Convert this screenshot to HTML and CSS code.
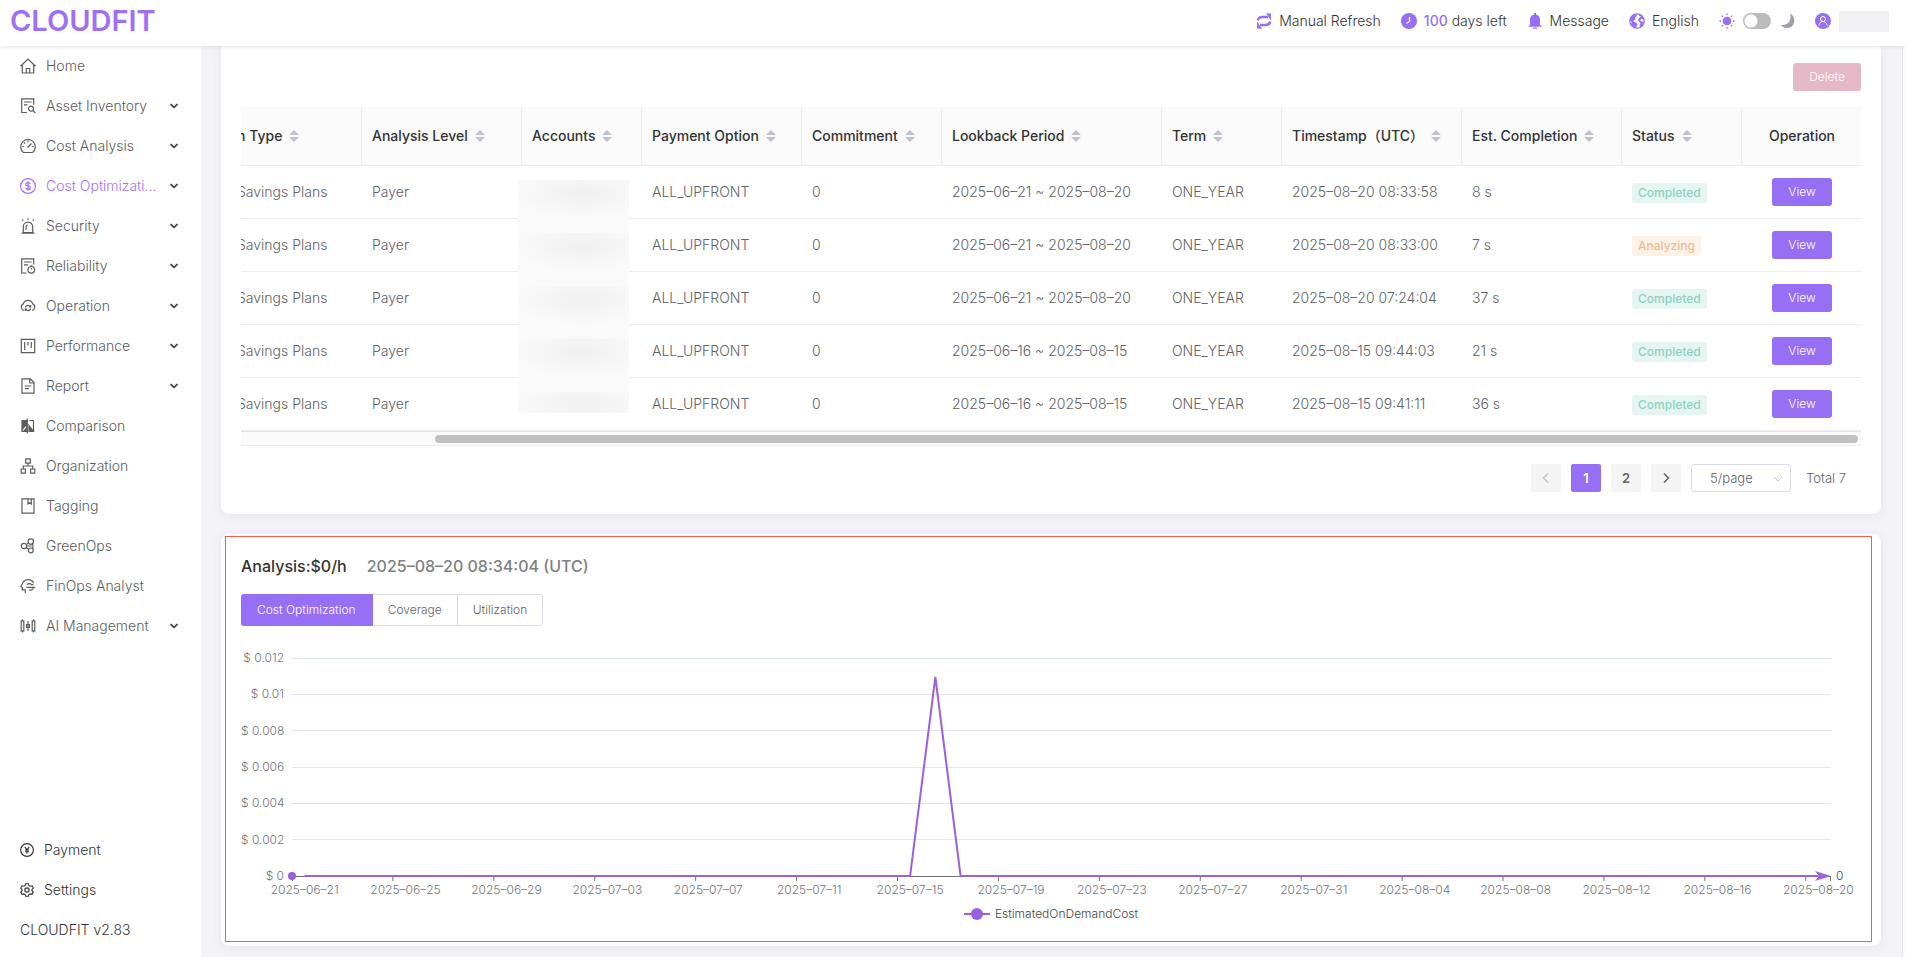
FILE: index.html
```html
<!DOCTYPE html>
<html lang="en">
<head>
<meta charset="utf-8">
<title>CLOUDFIT</title>
<link rel="stylesheet" href="styles.css">
</head>
<body>
<svg class="defs" aria-hidden="true">
  <symbol id="chev" viewBox="0 0 10 10"><path d="M1.500 3.200 5 6.400 8.500 3.200" fill="none" stroke="currentColor" stroke-width="1.800"/></symbol>
  <symbol id="sort" viewBox="0 0 10 14"><path d="M5 1 10 6H0zM5 13 0 8h10z" fill="currentColor"/></symbol>
</svg>
<header class="topbar">
  <a class="logo" href="#">CLOUDFIT</a>
  <div class="tools">
    <button class="tool"><svg class="ticon" viewBox="0 0 16 16"><path d="M1.800 7.500C2.200 5 4 4 6.500 4H12M14.200 8.500c-.4 2.500-2.200 3.500-4.700 3.500H4" fill="none" stroke="currentColor" stroke-width="2.400"/><path d="M10 .3l5 .2v7zM6 15.700l-5-.2v-7z" fill="currentColor"/></svg>Manual Refresh</button>
    <div class="tool"><svg class="ticon" viewBox="0 0 16 16"><circle cx="8" cy="8" r="8" fill="currentColor"/><path d="M8.500 4v4.500L5.500 10.500" fill="none" stroke="#fff" stroke-width="1.300"/></svg><span><b class="days">100</b> days left</span></div>
    <button class="tool"><svg class="ticon" viewBox="0 0 16 16"><path d="M7 0h2v1.500c2.600.6 4 2.500 4 5V12l1.500 1v.7h-13V13L3 12V6.500c0-2.500 1.400-4.400 4-5zM6 14.500h4v1.200H6z" fill="currentColor"/></svg>Message</button>
    <button class="tool"><svg class="ticon" viewBox="0 0 16 16"><circle cx="8" cy="8" r="7.200" fill="none" stroke="currentColor" stroke-width="1.300"/><path d="M.8 7.500C1 4 3.500 1.300 7 1l1 2-2 1.500.5 2L4 8l3 1.500 1.500 2L7 15c-2-.3-4.500-2-5.500-4.500l1.500-1zM9.500 1c3 .7 5 3 5.500 5.500l-2.500-.7-1.500 2 2.800 1L15 9c-.5 2.500-1.800 4.500-4 5.500l-.5-2.500 1-2-2.500-2.500L10 5l2-1.500-2-.7z" fill="currentColor"/></svg>English</button>
    <label class="tool theme"><svg class="ticon" viewBox="0 0 16 16"><circle cx="8" cy="8" r="4.300" fill="currentColor"/><path d="M8 .5v1.500M8 14v1.500M.5 8H2M14 8h1.500M2.700 2.700l1.100 1.100M12.200 12.200l1.100 1.100M2.700 13.300l1.100-1.100M12.200 3.800l1.100-1.100" stroke="currentColor" stroke-width="1.400"/></svg><input class="switch" type="checkbox" role="switch" aria-label="Dark theme"><svg class="ticon moon" viewBox="0 0 16 16"><path d="M11 .5C15 2.500 16.500 7 14.500 11 12.500 15.500 6 17 1 11.500 6.500 13.500 13.500 9.500 11 .5z" fill="currentColor"/></svg></label>
    <button class="tool user" aria-label="Account"><svg class="ticon" viewBox="0 0 16 16"><circle cx="8" cy="8" r="8" fill="currentColor"/><circle cx="8" cy="6" r="2.500" fill="none" stroke="#fff"/><path d="M3.800 12.500C4.300 10 6 8.500 8 8.500s3.700 1.500 4.200 4" fill="none" stroke="#fff"/></svg><span class="masked"></span></button>
  </div>
</header>
<div class="shell">
<aside class="side">
  <nav class="menu">
    <a class="item" href="#"><svg class="icon" viewBox="0 0 16 16"><path d="M.5 8.300 8 1l7.500 7.300M2.300 7v8h11.400V7M6.300 15v-4.500h3.400V15"/></svg><span>Home</span></a>
    <a class="item" href="#"><svg class="icon" viewBox="0 0 16 16"><path d="M7 14.500H1.700V.800h12v6M4 4h7.500M4 6.800h3.500M13 12.500l2.500 2.700"/><circle cx="11" cy="10.600" r="2.500"/></svg><span>Asset Inventory</span><svg class="chev"><use href="#chev"/></svg></a>
    <a class="item" href="#"><svg class="icon" viewBox="0 0 16 16"><path d="M3.500 14.500a7.300 7.300 0 1 1 9 0zM7.500 9.500l4-4M8 2.500v1.800M2.300 8.500h1.800M4 4.500l1.200 1.200M11.900 8.500h1.800"/></svg><span>Cost Analysis</span><svg class="chev"><use href="#chev"/></svg></a>
    <a class="item active" href="#"><svg class="icon" viewBox="0 0 16 16"><circle cx="8" cy="8" r="7.400"/><path d="M10.300 6C10 5 9.100 4.600 8 4.600c-1.300 0-2.300.6-2.300 1.600 0 2.400 4.700 1 4.700 3.500 0 1.100-1 1.700-2.400 1.700-1.300 0-2.200-.5-2.500-1.500M8 3.300v9.400"/></svg><span>Cost Optimizati...</span><svg class="chev"><use href="#chev"/></svg></a>
    <a class="item" href="#"><svg class="icon" viewBox="0 0 16 16"><path d="M1.500 15.200h13M3.300 14.500V8.800a4.700 4.700 0 0 1 9.400 0v5.700zM6 12V9c0-1 .7-1.800 1.700-1.900M8 .3V2M2.200 1.500l1 1.300M13.800 1.500l-1 1.300"/></svg><span>Security</span><svg class="chev"><use href="#chev"/></svg></a>
    <a class="item" href="#"><svg class="icon" viewBox="0 0 16 16"><path d="M6.500 15H1.700V.800h12V6.500M4 4h7.500M4 6.800h4M10.500 7.800h2M11.500 10v1.500"/><circle cx="11.300" cy="11.800" r="3.300"/></svg><span>Reliability</span><svg class="chev"><use href="#chev"/></svg></a>
    <a class="item" href="#"><svg class="icon" viewBox="0 0 16 16"><path d="M4 12.500A3.500 3.500 0 0 1 3.300 5.900 4.900 4.900 0 0 1 12.700 5.900 3.500 3.500 0 0 1 12 12.500M5.300 9.500A2.800 2.800 0 0 1 10.400 8.800M10.700 10.500A2.800 2.800 0 0 1 5.600 11.300M10.700 7v2H8.900M5.300 13v-2h1.800"/></svg><span>Operation</span><svg class="chev"><use href="#chev"/></svg></a>
    <a class="item" href="#"><svg class="icon" viewBox="0 0 16 16"><path d="M1.300 1.300h13.400v13.400H1.300z"/><path d="M4.700 4v8M8 4v3.500M11.300 4v6"/></svg><span>Performance</span><svg class="chev"><use href="#chev"/></svg></a>
    <a class="item" href="#"><svg class="icon" viewBox="0 0 16 16"><path d="M2 .800h8.500L14 4.500V15.200H2zM9.800 1v4H14M4.800 8h6.500M4.800 10.700h4"/></svg><span>Report</span><svg class="chev"><use href="#chev"/></svg></a>
    <a class="item" href="#"><svg class="icon" viewBox="0 0 16 16"><path d="M2 2.500h5v11H2z" fill="currentColor"/><path d="M7.300.5v15M9.500 2.500h4v11"/><path d="M9 7.500l4.500 6H9z" fill="currentColor"/><path d="M3 12.500l3-3.800" stroke="#fff"/></svg><span>Comparison</span></a>
    <a class="item" href="#"><svg class="icon" viewBox="0 0 16 16"><path d="M5.700.8h4.600v4.400H5.700zM1.200 11h4.200v4.200H1.200zM10.600 11h4.200v4.200h-4.200zM8 5.200V8M3.300 11V8h9.400v3"/></svg><span>Organization</span></a>
    <a class="item" href="#"><svg class="icon" viewBox="0 0 16 16"><path d="M2 .8h12v14.400H2zM8 1v5l1.600-1.200L11.300 6V1"/></svg><span>Tagging</span></a>
    <a class="item" href="#"><svg class="icon" viewBox="0 0 16 16"><circle cx="4" cy="8" r="2.700"/><circle cx="10.800" cy="3.600" r="2.700"/><circle cx="10.800" cy="12.400" r="2.400"/><path d="M6.300 6.500l2-1.300M6.300 9.500l2.200 1.500M6.700 8h5M12.800 5.500v5.200"/></svg><span>GreenOps</span></a>
    <a class="item" href="#"><svg class="icon" viewBox="0 0 16 16"><path d="M13.700 5A6.200 6.200 0 0 0 2.300 6L.8 8.700l1.500.6v2.500h3V15M6.800 6.700c1.500-1.500 3.500-1.300 5 0h1.700M6.500 9.300h8.700M9 11.800c1.500 1 3.500.3 4.300-1.500"/></svg><span>FinOps Analyst</span></a>
    <a class="item" href="#"><svg class="icon" viewBox="0 0 16 16"><rect x="1.200" y="3" width="2.600" height="10"/><rect x="12.200" y="3" width="2.600" height="10"/><path d="M2.500 1.500V3M2.500 13v1.500M13.500 1.500V3M13.500 13v1.500M8 3v10M6.500 6.500h3v3h-3z"/></svg><span>AI Management</span><svg class="chev"><use href="#chev"/></svg></a>
  </nav>
  <nav class="menu foot">
    <a class="item" href="#"><svg class="icon small" viewBox="0 0 16 16"><circle cx="8" cy="8" r="7.300"/><path d="M5.500 4.500 8 7.800l2.500-3.300M8 7.800V12M5.700 8h4.600M5.700 10h4.600"/></svg><span>Payment</span></a>
    <a class="item" href="#"><svg class="icon small" viewBox="0 0 16 16"><path d="M6.500.800h3l.6 2 1.500.9 2.100-.5 1.500 2.600L13.700 7.300v1.500l1.500 1.500-1.500 2.600-2.100-.5-1.500.9-.6 1.900h-3l-.6-1.900-1.500-.9-2.100.5L.8 10.300l1.500-1.500V7.300L.8 5.800l1.500-2.600 2.100.5 1.500-.9z"/><circle cx="8" cy="8" r="2.400"/></svg><span>Settings</span></a>
    <div class="item">CLOUDFIT v2.83</div>
  </nav>
</aside>
<main class="main">
  <section class="card list">
    <div class="actions"><button class="btn danger" disabled>Delete</button></div>
    <div class="tablebox">
      <table class="grid">
        <colgroup><col class="w135"><col class="w160"><col class="w120"><col class="w160"><col class="w140"><col class="w220"><col class="w120"><col class="w180"><col class="w160"><col class="w120"><col class="w120"></colgroup>
        <thead><tr>
          <th>n Type<svg class="sort"><use href="#sort"/></svg></th>
          <th>Analysis Level<svg class="sort"><use href="#sort"/></svg></th>
          <th>Accounts<svg class="sort"><use href="#sort"/></svg></th>
          <th>Payment Option<svg class="sort"><use href="#sort"/></svg></th>
          <th>Commitment<svg class="sort"><use href="#sort"/></svg></th>
          <th>Lookback Period<svg class="sort"><use href="#sort"/></svg></th>
          <th>Term<svg class="sort"><use href="#sort"/></svg></th>
          <th>Timestamp（UTC）<svg class="sort"><use href="#sort"/></svg></th>
          <th>Est. Completion<svg class="sort"><use href="#sort"/></svg></th>
          <th>Status<svg class="sort"><use href="#sort"/></svg></th>
          <th class="mid">Operation</th>
        </tr></thead>
        <tbody>
          <tr><td>Savings Plans</td><td>Payer</td><td></td><td>ALL_UPFRONT</td><td>0</td><td>2025–06–21 ~ 2025–08–20</td><td>ONE_YEAR</td><td>2025–08–20 08:33:58</td><td>8 s</td><td><span class="tag done">Completed</span></td><td class="mid"><button class="btn">View</button></td></tr>
          <tr><td>Savings Plans</td><td>Payer</td><td></td><td>ALL_UPFRONT</td><td>0</td><td>2025–06–21 ~ 2025–08–20</td><td>ONE_YEAR</td><td>2025–08–20 08:33:00</td><td>7 s</td><td><span class="tag busy">Analyzing</span></td><td class="mid"><button class="btn">View</button></td></tr>
          <tr><td>Savings Plans</td><td>Payer</td><td></td><td>ALL_UPFRONT</td><td>0</td><td>2025–06–21 ~ 2025–08–20</td><td>ONE_YEAR</td><td>2025–08–20 07:24:04</td><td>37 s</td><td><span class="tag done">Completed</span></td><td class="mid"><button class="btn">View</button></td></tr>
          <tr><td>Savings Plans</td><td>Payer</td><td></td><td>ALL_UPFRONT</td><td>0</td><td>2025–06–16 ~ 2025–08–15</td><td>ONE_YEAR</td><td>2025–08–15 09:44:03</td><td>21 s</td><td><span class="tag done">Completed</span></td><td class="mid"><button class="btn">View</button></td></tr>
          <tr><td>Savings Plans</td><td>Payer</td><td></td><td>ALL_UPFRONT</td><td>0</td><td>2025–06–16 ~ 2025–08–15</td><td>ONE_YEAR</td><td>2025–08–15 09:41:11</td><td>36 s</td><td><span class="tag done">Completed</span></td><td class="mid"><button class="btn">View</button></td></tr>
        </tbody>
      </table>
      <div class="veil"></div>
      <div class="hscroll"><div class="thumb"></div></div>
    </div>
    <div class="pager">
      <button class="page" disabled aria-label="Previous"><svg class="arrow" viewBox="0 0 12 12"><path d="M8 1.500 3.500 6 8 10.500"/></svg></button>
      <button class="page current">1</button>
      <button class="page">2</button>
      <button class="page" aria-label="Next"><svg class="arrow" viewBox="0 0 12 12"><path d="M4 1.500 8.500 6 4 10.500"/></svg></button>
      <div class="sizebox"><select class="size" aria-label="Rows per page"><option>5/page</option></select><svg class="caret" viewBox="0 0 10 10"><path d="M1 3l4 4 4-4"/></svg></div>
      <span class="total">Total 7</span>
    </div>
  </section>
  <section class="card analysis">
    <h2 class="title">Analysis:$0/h <span class="when">2025–08–20 08:34:04 (UTC)</span></h2>
    <div class="tabs"><button class="tab on">Cost Optimization</button><button class="tab">Coverage</button><button class="tab">Utilization</button></div>
    <div class="chart">
      <div class="yaxis"><span>$ 0.012</span><span>$ 0.01</span><span>$ 0.008</span><span>$ 0.006</span><span>$ 0.004</span><span>$ 0.002</span><span>$ 0</span></div>
      <div class="plot">
        <svg class="lines" viewBox="0 0 610 218" preserveAspectRatio="none">
          <path class="gl" d="M0 .5H610M0 36.500H610M0 72.500H610M0 109.500H610M0 145.500H610M0 181.500H610"/>
          <path class="ticks" d="M0 218.500H610M.2 218v5M40 218v5M80 218v5M120 218v5M160 218v5M200 218v5M240 218v5M280 218v5M320 218v5M360 218v5M400 218v5M440 218v5M480 218v5M520 218v5M560 218v5M600 218v5M609.800 218v5"/>
          <path class="serie" d="M5 218H245L255 19 265 218H605"/>
        </svg>
        <span class="dot"></span>
        <svg class="tip" viewBox="0 0 16 10"><path d="M16 5 0 10 4 5 0 0z" fill="#9a60e0"/></svg>
        <span class="endval">0</span>
      </div>
      <div class="xaxis"><span>2025–06–21</span><span>2025–06–25</span><span>2025–06–29</span><span>2025–07–03</span><span>2025–07–07</span><span>2025–07–11</span><span>2025–07–15</span><span>2025–07–19</span><span>2025–07–23</span><span>2025–07–27</span><span>2025–07–31</span><span>2025–08–04</span><span>2025–08–08</span><span>2025–08–12</span><span>2025–08–16</span><span>2025–08–20</span></div>
    </div>
    <div class="legend"><svg class="key" viewBox="0 0 26 12"><path d="M0 6h26" stroke="#9a60e0" stroke-width="2"/><circle cx="13" cy="6" r="6" fill="#9a60e0"/></svg>EstimatedOnDemandCost</div>
    <div class="frame"></div>
  </section>
</main>
<div class="rail"></div>
</div>
</body>
</html>
```
FILE: styles.css
```css
* { box-sizing: border-box; }
body {
  margin: 0;
  height: 100vh;
  display: flex;
  flex-direction: column;
  overflow: hidden;
  background: #f4f4f8;
  color: #333;
  font: 350 14px/20px Inter, "Noto Sans CJK SC", sans-serif;
}
button, select { font: inherit; color: inherit; }
button { border: 0; padding: 0; background: none; cursor: pointer; }
a { color: inherit; text-decoration: none; }
.defs { display: none; }

.topbar {
  height: 46px;
  flex: none;
  display: flex;
  align-items: center;
  justify-content: space-between;
  padding: 0 16px 4px 10px;
  background: #fff;
  box-shadow: 0 1px 4px rgba(0, 21, 41, .1);
  position: relative;
  z-index: 2;
}
.logo { color: #a06ff8; font-size: 29px; line-height: 36px; font-weight: 600; }
.tools { display: flex; align-items: center; gap: 20px; }
.tool { display: flex; align-items: center; gap: 7px; }
.theme, .user { gap: 8px; }
.ticon { width: 16px; height: 16px; color: #976ff5; flex: none; }
.days { color: #976ff5; font-weight: 500; }
.moon { color: #a0a1a8; }
.switch {
  appearance: none;
  width: 28px;
  height: 16px;
  margin: 0;
  border-radius: 8px;
  background: radial-gradient(circle at 8px 8px, #fff 6px, transparent 7px) #bbb;
}
.masked { width: 50px; height: 21px; background: #f1f1f4; }

.shell { flex: 1; min-height: 0; display: flex; }
.side {
  width: 201px;
  flex: none;
  display: flex;
  flex-direction: column;
  justify-content: space-between;
  padding-bottom: 7px;
  background: #fff;
  color: #5c5c60;
}
.menu { display: flex; flex-direction: column; }
.item { height: 40px; display: flex; align-items: center; gap: 10px; padding: 0 22px 0 20px; white-space: nowrap; }
.item.active { color: #a273f9; }
.item.active .chev { color: #444; }
.foot { color: #333; }
.icon { width: 16px; height: 16px; flex: none; fill: none; stroke: currentColor; stroke-width: 1.2; }
.icon.small { width: 14px; height: 14px; stroke-width: 1.3; }
.chev { width: 10px; height: 10px; margin-left: auto; flex: none; color: #444; }

.main { flex: 1; min-width: 0; padding: 0 21px 11px 20px; display: flex; flex-direction: column; gap: 20px; }
.card { background: #fff; border-radius: 8px; box-shadow: 0 2px 12px rgba(0, 0, 0, .07); padding: 17px 20px 0; flex: none; }
.list { border-top-left-radius: 4px; border-top-right-radius: 4px; padding-bottom: 22px; }
.actions { display: flex; justify-content: flex-end; }
.btn {
  height: 28px;
  padding: 0 16px;
  border-radius: 3px;
  background: #976ff5;
  color: #fff;
  font-size: 12px;
}
.danger { background: #e5b8c8; }
.tablebox { position: relative; margin-top: 16px; overflow: hidden; }
.grid { width: calc(100% + 14px); margin-left: -14px; table-layout: fixed; border-collapse: separate; border-spacing: 0; color: #606266; }
.w120 { width: 120px; }
.w135 { width: 135px; }
.w140 { width: 140px; }
.w160 { width: 160px; }
.w180 { width: 180px; }
.w220 { width: 220px; }
th {
  height: 59px;
  padding: 0 10px;
  text-align: left;
  font-weight: 500;
  color: #333;
  background: #fafafa;
  border-bottom: 1px solid #ebebf0;
  border-right: 1px solid #ebebf0;
  white-space: nowrap;
}
th:last-child { border-right: 0; }
td { height: 53px; padding: 0 10px; border-bottom: 1px solid #ebebf0; white-space: nowrap; }
th.mid, td.mid { text-align: center; }
.sort { width: 10px; height: 14px; margin-left: 7px; vertical-align: -2px; color: #c0c2cb; }
.tag { display: inline-block; height: 20px; padding: 0 6px; border-radius: 3px; font-size: 12px; font-weight: 500; line-height: 20px; }
.done { color: #8bd3c1; background: #e6f5f1; }
.busy { color: #efbd90; background: #fdf2e8; }
.veil {
  position: absolute;
  left: 17.1%;
  top: 73px;
  width: 111px;
  height: 233px;
  background: radial-gradient(ellipse 70px 26px at 58% 13px, #f0f0f1, #fafafa) 0 0 / 100% 53px;
}
.hscroll { height: 15px; padding: 3px 3px 0 0; background: #fafafa; border-top: 1px solid #e4e4ea; border-bottom: 1px solid #ebebf0; }
.thumb { width: 88%; height: 8px; margin-left: auto; border-radius: 4px; background: #c1c1c1; }

.pager { display: flex; justify-content: flex-end; align-items: center; gap: 10px; margin-top: 18px; padding-right: 15px; color: #606266; }
.page { width: 30px; height: 28px; border-radius: 2px; background: #f4f4f5; font-size: 13px; font-weight: 600; display: flex; align-items: center; justify-content: center; }
.page:disabled { color: #c0c4cc; }
.page.current { background: #976ff5; color: #fff; }
.arrow { width: 12px; height: 12px; fill: none; stroke: currentColor; stroke-width: 1.5; }
.sizebox { position: relative; }
.size { appearance: none; width: 100px; height: 28px; padding: 0 0 0 18px; border: 1px solid #dcdce8; border-radius: 3px; background: #fff; font-size: 13px; display: block; }
.caret { position: absolute; right: 8px; top: 10px; width: 10px; height: 10px; fill: none; stroke: #c0c4cc; pointer-events: none; }
.total { font-size: 13px; margin-left: 5px; }

.analysis { position: relative; padding-top: 20px; padding-bottom: 24px; }
.title { margin: 0; font-size: 16px; line-height: 24px; font-weight: 500; color: #333; display: flex; gap: 20px; }
.when { color: #808084; font-weight: 450; }
.tabs { display: flex; margin-top: 16px; }
.tab { height: 32px; padding: 0 15px; border: 1px solid #dcdce8; border-left: 0; font-size: 12px; color: #606266; }
.tab:last-child { border-radius: 0 3px 3px 0; }
.tab.on { background: #976ff5; border-color: #976ff5; color: #fff; border-radius: 3px 0 0 3px; padding: 0 16px; }
.chart { display: grid; grid-template-columns: 43px 1fr; column-gap: 8px; padding-right: 30px; margin-top: 32px; font-size: 12px; line-height: 16px; color: #73747c; }
.yaxis { display: flex; flex-direction: column; justify-content: space-between; margin: -8px 0; text-align: right; white-space: nowrap; }
.plot { position: relative; height: 218px; }
.lines { display: block; width: 100%; height: 100%; overflow: visible; fill: none; }
.lines path { vector-effect: non-scaling-stroke; }
.gl { stroke: #e0e6f1; }
.ticks { stroke: #6e7079; }
.serie { stroke: #9a60e0; stroke-width: 2; }
.dot { position: absolute; left: -4px; top: 214px; width: 8px; height: 8px; border-radius: 50%; background: #9a60e0; }
.tip { position: absolute; right: 0; top: 213px; width: 16px; height: 10px; }
.endval { position: absolute; left: 100%; top: 210px; margin-left: 5px; color: #444; }
.xaxis { grid-column: 2; display: grid; grid-template-columns: repeat(61, minmax(0, 1fr)); margin-top: 6px; }
.xaxis span { display: flex; justify-content: center; grid-column: span 4; width: 25%; white-space: nowrap; }
.xaxis span:last-child { grid-column: span 1; width: 100%; }
.legend { display: flex; justify-content: center; align-items: center; gap: 5px; margin: 8px 0 0; font-size: 12px; line-height: 16px; color: #444; }
.key { width: 26px; height: 12px; }
.frame { position: absolute; inset: 2px 9px 4px 4px; border: 1px solid #fa5a50; pointer-events: none; }
.rail { width: 3px; flex: none; background: #fafafa; border-left: 1px solid #e2e2e6; }
```
